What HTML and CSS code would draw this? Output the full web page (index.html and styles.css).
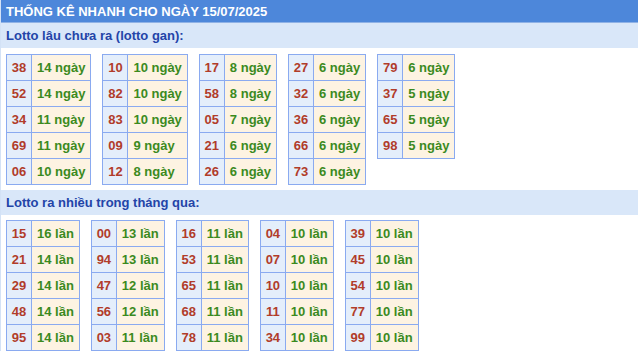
FILE: index.html
```html
<!DOCTYPE html>
<html lang="vi">
<head>
<meta charset="utf-8">
<link rel="stylesheet" href="styles.css">
</head>
<body>
<div class="box">
  <div class="title">THỐNG KÊ NHANH CHO NGÀY 15/07/2025</div>
  <div class="band">Lotto lâu chưa ra (lotto gan):</div>
  <div class="grid grid-top">
    <table class="lt">
      <tr><td class="n">38</td><td class="v">14 ngày</td></tr>
      <tr><td class="n">52</td><td class="v">14 ngày</td></tr>
      <tr><td class="n">34</td><td class="v">11 ngày</td></tr>
      <tr><td class="n">69</td><td class="v">11 ngày</td></tr>
      <tr><td class="n">06</td><td class="v">10 ngày</td></tr>
    </table>
    <table class="lt">
      <tr><td class="n">10</td><td class="v">10 ngày</td></tr>
      <tr><td class="n">82</td><td class="v">10 ngày</td></tr>
      <tr><td class="n">83</td><td class="v">10 ngày</td></tr>
      <tr><td class="n">09</td><td class="v">9 ngày</td></tr>
      <tr><td class="n">12</td><td class="v">8 ngày</td></tr>
    </table>
    <table class="lt">
      <tr><td class="n">17</td><td class="v">8 ngày</td></tr>
      <tr><td class="n">58</td><td class="v">8 ngày</td></tr>
      <tr><td class="n">05</td><td class="v">7 ngày</td></tr>
      <tr><td class="n">21</td><td class="v">6 ngày</td></tr>
      <tr><td class="n">26</td><td class="v">6 ngày</td></tr>
    </table>
    <table class="lt">
      <tr><td class="n">27</td><td class="v">6 ngày</td></tr>
      <tr><td class="n">32</td><td class="v">6 ngày</td></tr>
      <tr><td class="n">36</td><td class="v">6 ngày</td></tr>
      <tr><td class="n">66</td><td class="v">6 ngày</td></tr>
      <tr><td class="n">73</td><td class="v">6 ngày</td></tr>
    </table>
    <table class="lt">
      <tr><td class="n">79</td><td class="v">6 ngày</td></tr>
      <tr><td class="n">37</td><td class="v">5 ngày</td></tr>
      <tr><td class="n">65</td><td class="v">5 ngày</td></tr>
      <tr><td class="n">98</td><td class="v">5 ngày</td></tr>
    </table>
  </div>
  <div class="band">Lotto ra nhiều trong tháng qua:</div>
  <div class="grid grid-bottom">
    <table class="lt">
      <tr><td class="n">15</td><td class="v">16 lần</td></tr>
      <tr><td class="n">21</td><td class="v">14 lần</td></tr>
      <tr><td class="n">29</td><td class="v">14 lần</td></tr>
      <tr><td class="n">48</td><td class="v">14 lần</td></tr>
      <tr><td class="n">95</td><td class="v">14 lần</td></tr>
    </table>
    <table class="lt">
      <tr><td class="n">00</td><td class="v">13 lần</td></tr>
      <tr><td class="n">94</td><td class="v">13 lần</td></tr>
      <tr><td class="n">47</td><td class="v">12 lần</td></tr>
      <tr><td class="n">56</td><td class="v">12 lần</td></tr>
      <tr><td class="n">03</td><td class="v">11 lần</td></tr>
    </table>
    <table class="lt">
      <tr><td class="n">16</td><td class="v">11 lần</td></tr>
      <tr><td class="n">53</td><td class="v">11 lần</td></tr>
      <tr><td class="n">65</td><td class="v">11 lần</td></tr>
      <tr><td class="n">68</td><td class="v">11 lần</td></tr>
      <tr><td class="n">78</td><td class="v">11 lần</td></tr>
    </table>
    <table class="lt">
      <tr><td class="n">04</td><td class="v">10 lần</td></tr>
      <tr><td class="n">07</td><td class="v">10 lần</td></tr>
      <tr><td class="n">10</td><td class="v">10 lần</td></tr>
      <tr><td class="n">11</td><td class="v">10 lần</td></tr>
      <tr><td class="n">34</td><td class="v">10 lần</td></tr>
    </table>
    <table class="lt">
      <tr><td class="n">39</td><td class="v">10 lần</td></tr>
      <tr><td class="n">45</td><td class="v">10 lần</td></tr>
      <tr><td class="n">54</td><td class="v">10 lần</td></tr>
      <tr><td class="n">77</td><td class="v">10 lần</td></tr>
      <tr><td class="n">99</td><td class="v">10 lần</td></tr>
    </table>
  </div>
</div>
</body>
</html>
```
FILE: styles.css
```css
html, body {
  margin: 0;
  padding: 0;
  background: #ffffff;
}
body {
  font-family: "Liberation Sans", Arial, sans-serif;
  font-size: 13px;
  font-weight: bold;
}
.box {
  border-left: 1px solid #d3e2f6;
}
.title {
  height: 23px;
  line-height: 23px;
  background: #4d87da;
  color: #ffffff;
  padding-left: 5px;
  font-size: 13px;
  border-bottom: 1px solid #8fb2e6;
  box-sizing: border-box;
}
.band {
  height: 25px;
  line-height: 25px;
  background: #d9e7f9;
  color: #2344a8;
  padding-left: 5px;
  font-size: 13px;
}
.grid {
  display: flex;
  align-items: flex-start;
  gap: 11px;
  padding-left: 5px;
}
.grid-top {
  padding-top: 6px;
  padding-bottom: 5px;
}
.grid-bottom {
  padding-top: 5px;
}
.lt {
  border-collapse: collapse;
  border: 1px solid #8aaaf0;
}
.lt td {
  border: 1px solid #8aaaf0;
  height: 26px;
  box-sizing: border-box;
  white-space: nowrap;
  font-size: 13px;
}
.n {
  background: #e4eefb;
  color: #b13c2a;
  text-align: center;
  padding: 0;
  width: 25px;
}
.v {
  background: #fdf3e2;
  color: #3b8a1e;
  padding: 0 5px;
}
```
